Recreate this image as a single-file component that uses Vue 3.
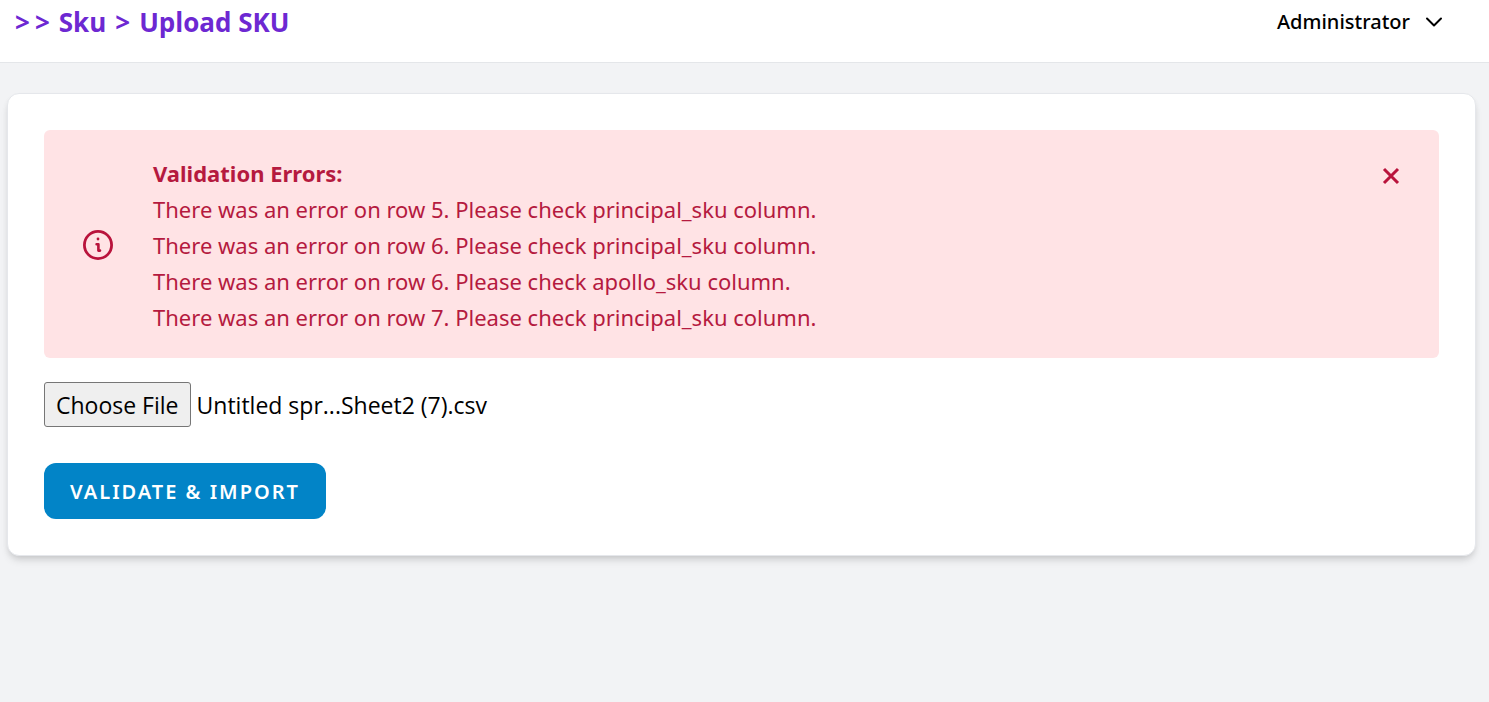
<script setup>
import { ref } from 'vue'

const errors = ref([
  'There was an error on row 5. Please check principal_sku column.',
  'There was an error on row 6. Please check principal_sku column.',
  'There was an error on row 6. Please check apollo_sku column.',
  'There was an error on row 7. Please check principal_sku column.',
])
const alertOpen = ref(true)
const fileInput = ref(null)
const fileName = ref('Untitled spr...Sheet2 (7).csv')

function onFileChange(event) {
  const file = event.target.files[0]
  if (file) fileName.value = file.name
}
</script>

<template>
  <div class="page">
    <header class="topbar">
      <h1 class="crumbs">
        <span class="lead"><span>&gt;</span><span>&gt;</span></span>
        <span>Sku</span>
        <span>&gt;</span>
        <span>Upload SKU</span>
      </h1>
      <button type="button" class="user" aria-haspopup="menu">
        Administrator
        <svg class="chevron" viewBox="0 0 18 12" aria-hidden="true">
          <path d="M2 2.5 9 9.5 16 2.5" />
        </svg>
      </button>
    </header>

    <main class="card">
      <section v-if="alertOpen" class="alert" role="alert">
        <svg class="info" viewBox="0 0 30 30" aria-hidden="true">
          <circle class="ring" cx="15" cy="15" r="13.6" />
          <circle class="dot" cx="15" cy="9" r="1.4" />
          <path class="stem" d="M13.6 14.2h1.8v6.4h1.6" />
        </svg>
        <div class="messages">
          <strong>Validation Errors:</strong>
          <p v-for="(error, index) in errors" :key="index">{{ error }}</p>
        </div>
        <button type="button" class="close" aria-label="Dismiss" @click="alertOpen = false">
          <svg viewBox="0 0 18 18" aria-hidden="true">
            <path d="M2 2 16 16M16 2 2 16" />
          </svg>
        </button>
      </section>

      <form class="form" @submit.prevent>
        <div class="file">
          <button type="button" class="choose" @click="fileInput.click()">Choose File</button>
          <input id="sku-file" ref="fileInput" type="file" accept=".csv" hidden @change="onFileChange" />
          <label for="sku-file">{{ fileName }}</label>
        </div>
        <button type="submit" class="submit">VALIDATE &amp; IMPORT</button>
      </form>
    </main>
  </div>
</template>

<style>
body {
  background: #f2f3f5;
}
</style>

<style scoped>
.page {
  min-height: 100vh;
  box-sizing: border-box;
  color: #000;
  font-family: "Segoe UI", "Noto Sans", "Open Sans", sans-serif;
  font-size: 22px;
  line-height: 36px;
}

button {
  font-family: inherit;
  cursor: pointer;
}

.topbar {
  display: flex;
  justify-content: space-between;
  align-items: flex-start;
  padding: 4px 46px 22px 15px;
  background: #fff;
  border-bottom: 1px solid #e4e6e9;
}

.crumbs {
  display: flex;
  gap: 9px;
  margin: 0;
  color: #6d28d2;
  font-family: "Segoe UI", "Open Sans", "Noto Sans", sans-serif;
  font-size: 26px;
  font-weight: 700;
  line-height: 36px;
}

.lead {
  display: flex;
  gap: 5px;
}

.user {
  display: flex;
  align-items: center;
  gap: 15px;
  padding: 0;
  border: 0;
  background: none;
  color: #000;
  font-size: 20px;
  font-weight: 500;
  line-height: 36px;
}

.chevron {
  width: 18px;
  height: 12px;
  fill: none;
  stroke: #000;
  stroke-width: 2;
  stroke-linecap: round;
  stroke-linejoin: round;
}

.card {
  margin: 30px 13px 0 7px;
  padding: 36px;
  background: #fff;
  border: 1px solid #e5e7eb;
  border-radius: 12px;
  box-shadow: 0 6px 9px -2px rgba(0, 0, 0, 0.12), 0 3px 6px -2px rgba(0, 0, 0, 0.1);
}

.alert {
  display: flex;
  align-items: center;
  padding: 24px 39px 23px;
  background: #ffe3e5;
  color: #b51a3f;
  border-radius: 6px;
}

.info {
  flex: none;
  width: 30px;
  height: 30px;
  margin-right: 40px;
  fill: none;
  stroke: #b9133c;
}

.ring {
  stroke-width: 2.8;
}

.dot {
  fill: #b9133c;
  stroke: none;
}

.stem {
  stroke-width: 2.6;
  stroke-linecap: round;
  stroke-linejoin: round;
}

.messages {
  flex: 1;
  padding-top: 1px;
}

.messages strong {
  display: block;
  font-weight: 700;
}

.messages p {
  margin: 0;
}

.close {
  align-self: flex-start;
  display: flex;
  margin-top: 13px;
  padding: 0;
  border: 0;
  background: none;
}

.close svg {
  width: 18px;
  height: 18px;
  fill: none;
  stroke: #b9133c;
  stroke-width: 3;
}

.form {
  display: flex;
  flex-direction: column;
  align-items: flex-start;
  gap: 36px;
  margin-top: 24px;
}

.file {
  display: flex;
  align-items: center;
  gap: 6px;
  font-family: "Segoe UI", "Open Sans", "Noto Sans", sans-serif;
  font-size: 23px;
}

.choose {
  padding: 5px 11px 3px;
  background: #efefef;
  border: 1px solid #767676;
  border-radius: 3px;
  color: #000;
  font-size: 23px;
  line-height: 35px;
}

.submit {
  padding: 11px 26px 9px;
  background: #0284c7;
  border: 0;
  border-radius: 12px;
  color: #fff;
  font-size: 20px;
  font-weight: 600;
  line-height: 36px;
  letter-spacing: 2px;
}
</style>
